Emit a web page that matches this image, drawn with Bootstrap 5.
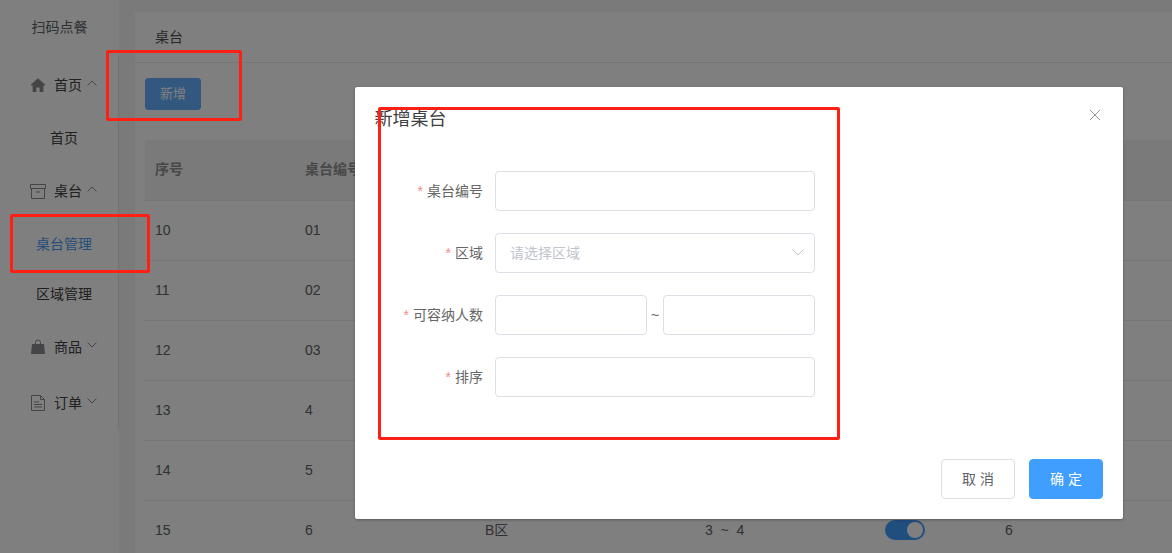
<!DOCTYPE html>
<html lang="zh"><head><meta charset="utf-8"><title>桌台</title>
<link href="https://cdn.jsdelivr.net/npm/bootstrap@5.3.0/dist/css/bootstrap.min.css" rel="stylesheet">
<style>
html,body{height:553px;overflow:hidden}
body{font-family:"Liberation Sans","Noto Sans CJK SC",sans-serif;font-size:14px;color:#606266;background:#f4f4f4}
.shell{height:553px}
.side{width:119px;flex:none;background:#fff;height:553px}
.brand{height:56px;line-height:54px;text-align:center;color:#606266}
.side-nav{height:374px;border-right:1px solid #e6e6e6;padding-top:1px}
.sub-t{height:56px;padding-left:31px;color:#404040}
.sub-t svg.ic{width:14px;height:16px;flex:none;color:#8a8a8e}
.sub-t .lbl{margin-left:9px}
.sub-t .chev{width:10px;height:6px;margin-left:5px;margin-top:-5px;flex:none}
.sub-i{height:50px;line-height:50px;text-align:center;color:#404040;padding-left:10px}
.sub-i.on{color:#4d9df0}
.main{flex:1;padding:12px 0 0 16px;min-width:0}
.paper{background:#fff;height:541px;overflow:hidden}
.paper-h{height:51px;line-height:50px;padding-left:20px;border-bottom:1px solid #ebebeb;color:#505050}
.paper-b{padding:15px 0 0 10px}
.add{width:56px;height:32px;padding:0;font-size:13px;background:#66b1ff;border:1px solid #66b1ff;color:#fff;border-radius:3px}
.tb{margin:30px 0 0;table-layout:fixed;width:1027px;--bs-table-bg:transparent;color:#606266;--bs-table-color:#666}
.tb th,.tb td{padding:0 10px;vertical-align:middle;border-bottom:1px solid #ebebeb;height:60px}
.tb th{background:#f4f4f4;color:#909090;font-weight:700}
.sw{display:block;width:40px;height:20px;border-radius:10px;background:#409eff;position:relative}
.sw::after{content:"";position:absolute;right:2px;top:2px;width:16px;height:16px;border-radius:50%;background:#fff}
.mask{position:absolute;inset:0;background:rgba(0,0,0,.5)}
.dlg{position:absolute;left:355px;top:87px;width:768px;height:432px;background:#fff;border:0;border-radius:2px;box-shadow:0 1px 3px rgba(0,0,0,.3);padding:0}
.dlg-title{position:absolute;left:19.5px;top:20px;font-size:18px;line-height:24px;color:#404040}
.dlg-x{position:absolute;left:734px;top:22px;width:12px;height:12px;line-height:0;padding:0;border:0;background:none}
.dlg-form{padding-top:84px;padding-left:20px;width:460px}
.frow{height:40px;margin-bottom:22px}
.flab{width:108px;flex:none;text-align:right;color:#666;line-height:40px}
.flab i{font-style:normal;color:#f78989;margin-right:4px}
.fctl{width:320px;margin-left:12px;flex:none;min-width:0}
.ipt{height:40px;border:1px solid #dcdfe6;border-radius:4px;padding:0 14px;background:#fff;font-size:14px;color:#c0c4cc;box-shadow:none}
.sel{line-height:38px;position:relative}
.sel svg{position:absolute;right:10px;top:15px;width:12px;height:7px}
.tilde{width:16px;text-align:center;flex:none;line-height:40px}
.dlg-foot{position:absolute;right:20px;bottom:20px;gap:14px}
.bt{width:74px;height:40px;padding:0;font-size:14px;border-radius:4px}
.bt-d{background:#fff;border:1px solid #dcdfe6;color:#606266}
.bt-p{background:#409eff;border:1px solid #409eff;color:#fff}
.mk{position:absolute;border:3px solid #ff2015;border-radius:2px;pointer-events:none}
.mk1{left:106px;top:50px;width:136px;height:71px}
.mk2{left:10px;top:214px;width:140px;height:59px}
.mk3{left:378px;top:107px;width:462px;height:333px}
</style></head><body>
<div class="shell d-flex">
  <aside class="side">
    <div class="brand">扫码点餐</div>
    <nav class="side-nav">
      <div class="sub-t d-flex align-items-center"><svg class="ic" viewBox="0 0 14 16"><path fill="currentColor" d="M7 1.200 0 7.600v1h1.600V15h3.800v-4.600h3.200V15h3.800V8.600H14v-1z"/></svg><span class="lbl">首页</span><svg class="chev" viewBox="0 0 10 6"><path d="M.5 5.500 5 1l4.500 4.500" fill="none" stroke="#909399"/></svg></div>
      <div class="sub-i">首页</div>
      <div class="sub-t d-flex align-items-center"><svg class="ic" viewBox="0 0 16 16" style="width:16px;margin-left:-1px;margin-right:-1px"><path fill="none" stroke="currentColor" d="M.5 1.500h15v4H.5zM1.500 5.500v10h13v-10M6 9h4"/></svg><span class="lbl">桌台</span><svg class="chev" viewBox="0 0 10 6"><path d="M.5 5.500 5 1l4.500 4.500" fill="none" stroke="#909399"/></svg></div>
      <div class="sub-i on">桌台管理</div>
      <div class="sub-i">区域管理</div>
      <div class="sub-t d-flex align-items-center"><svg class="ic" viewBox="0 0 14 16"><path fill="currentColor" d="M1 5h12l1 10H0z"/><path fill="none" stroke="currentColor" d="M4.500 7V3.500a2.500 2.500 0 0 1 5 0V7"/></svg><span class="lbl">商品</span><svg class="chev" viewBox="0 0 10 6"><path d="M.5.500 5 5 9.500.500" fill="none" stroke="#909399"/></svg></div>
      <div class="sub-t d-flex align-items-center"><svg class="ic" viewBox="0 0 14 16"><path fill="none" stroke="currentColor" d="M.5.500h9l4 4v11H.5zM9.500.500v4h4M3 7h5M3 9.500h8M3 12h8"/></svg><span class="lbl">订单</span><svg class="chev" viewBox="0 0 10 6"><path d="M.5.500 5 5 9.500.500" fill="none" stroke="#909399"/></svg></div>
    </nav>
  </aside>
  <main class="main">
    <div class="paper">
      <div class="paper-h">桌台</div>
      <div class="paper-b">
        <button class="btn add" type="button">新增</button>
        <table class="table tb">
          <colgroup><col style="width:150px"><col style="width:180px"><col style="width:220px"><col style="width:180px"><col style="width:120px"><col></colgroup>
          <thead><tr><th>序号</th><th>桌台编号</th><th>区域</th><th>可容纳人数</th><th>状态</th><th>排序</th></tr></thead>
          <tbody>
            <tr><td>10</td><td>01</td><td>A区</td><td>1&nbsp;&nbsp;~&nbsp;&nbsp;2</td><td><span class="sw"></span></td><td>1</td></tr>
            <tr><td>11</td><td>02</td><td>A区</td><td>1&nbsp;&nbsp;~&nbsp;&nbsp;2</td><td><span class="sw"></span></td><td>2</td></tr>
            <tr><td>12</td><td>03</td><td>A区</td><td>1&nbsp;&nbsp;~&nbsp;&nbsp;2</td><td><span class="sw"></span></td><td>3</td></tr>
            <tr><td>13</td><td>4</td><td>B区</td><td>3&nbsp;&nbsp;~&nbsp;&nbsp;4</td><td><span class="sw"></span></td><td>4</td></tr>
            <tr><td>14</td><td>5</td><td>B区</td><td>3&nbsp;&nbsp;~&nbsp;&nbsp;4</td><td><span class="sw"></span></td><td>5</td></tr>
            <tr><td>15</td><td>6</td><td>B区</td><td>3&nbsp;&nbsp;~&nbsp;&nbsp;4</td><td><span class="sw"></span></td><td>6</td></tr>
          </tbody>
        </table>
      </div>
    </div>
  </main>
</div>
<div class="mask"></div>
<div class="modal-content dlg">
  <div class="dlg-title">新增桌台</div>
  <button class="dlg-x" type="button" aria-label="关闭"><svg width="12" height="12" viewBox="0 0 12 12"><path d="M1 1l10 10M11 1 1 11" stroke="#909399" fill="none"/></svg></button>
  <form class="dlg-form">
    <div class="frow d-flex"><label class="flab"><i>*</i>桌台编号</label><div class="fctl"><input class="form-control ipt" type="text"></div></div>
    <div class="frow d-flex"><label class="flab"><i>*</i>区域</label><div class="fctl"><div class="ipt sel">请选择区域<svg viewBox="0 0 12 7"><path d="M.5.500 6 6l5.500-5.500" fill="none" stroke="#c0c4cc"/></svg></div></div></div>
    <div class="frow d-flex"><label class="flab"><i>*</i>可容纳人数</label><div class="fctl d-flex"><input class="form-control ipt" type="text"><span class="tilde">~</span><input class="form-control ipt" type="text"></div></div>
    <div class="frow d-flex"><label class="flab"><i>*</i>排序</label><div class="fctl"><input class="form-control ipt" type="text"></div></div>
  </form>
  <div class="dlg-foot d-flex">
    <button class="btn bt bt-d" type="button">取 消</button>
    <button class="btn bt bt-p" type="button">确 定</button>
  </div>
</div>
<div class="mk mk1"></div><div class="mk mk2"></div><div class="mk mk3"></div>
<script src="https://cdn.jsdelivr.net/npm/bootstrap@5.3.0/dist/js/bootstrap.bundle.min.js"></script>
</body></html>
